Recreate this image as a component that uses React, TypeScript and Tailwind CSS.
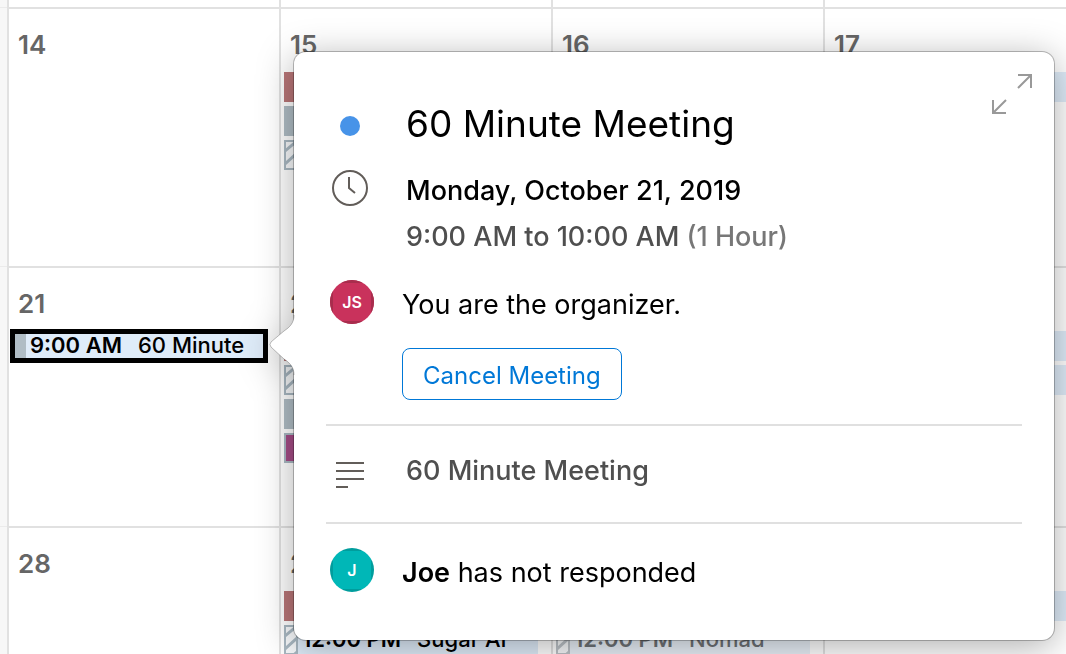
import React from "react";

type Bar = "red" | "slate" | "hatch" | "hatchLight" | "purple" | "sky";

interface CalendarEvent {
  bar: Bar;
  time?: string;
  title?: string;
  fill?: boolean;
  muted?: boolean;
  selected?: boolean;
}

interface Day {
  label?: string;
  events: CalendarEvent[];
}

const weeks: Day[][] = [
  [
    { label: "14", events: [] },
    { label: "15", events: [{ bar: "red" }, { bar: "slate" }, { bar: "hatch" }] },
    { label: "16", events: [] },
    { label: "17", events: [{ bar: "sky", fill: true }] },
  ],
  [
    {
      label: "21",
      events: [{ bar: "slate", time: "9:00 AM", title: "60 Minute", fill: true, selected: true }],
    },
    { label: "22", events: [{ bar: "red" }, { bar: "hatch" }, { bar: "slate" }, { bar: "purple" }] },
    { events: [] },
    { events: [{ bar: "sky", fill: true }, { bar: "sky", fill: true }] },
  ],
  [
    { label: "28", events: [] },
    {
      label: "29",
      events: [{ bar: "red" }, { bar: "hatch", time: "12:00 PM", title: "Sugar AI", fill: true }],
    },
    {
      events: [
        { bar: "red" },
        { bar: "hatchLight", time: "12:00 PM", title: "Nomad", fill: true, muted: true },
      ],
    },
    { events: [{ bar: "sky", fill: true }] },
  ],
];

const barClass: Record<Bar, string> = {
  red: "bg-[#b97678]",
  slate: "bg-[#b0bdc5]",
  hatch: "border-2 border-[#a9b8c2] bg-[#f7f9fb] text-[#a9b8c2]",
  hatchLight: "border-2 border-[#bcc2c7] bg-[#f7f9fb] text-[#bcc2c7]",
  purple: "border-2 border-[#a9b8c2] bg-[#a54c86]",
  sky: "bg-[#dcebf6]",
};

function EventBar({ bar }: { bar: Bar }) {
  const hatched = bar === "hatch" || bar === "hatchLight";
  return (
    <span className={`h-full w-3.5 shrink-0 overflow-hidden ${barClass[bar]}`}>
      {hatched && (
        <svg viewBox="0 0 10 26" className="block h-full w-full" fill="none" stroke="currentColor" strokeWidth="3">
          <path d="M-1 9 11 -1M-1 22 11 11M-1 36 11 25" />
        </svg>
      )}
    </span>
  );
}

function EventRow({ event }: { event: CalendarEvent }) {
  const fill = event.fill ? (event.muted ? "bg-[#e9f0f8]" : "bg-[#dfecf9]") : "";
  const ink = event.muted ? "text-[#6e7276]" : "text-black";
  const outline = event.selected ? "outline-[5px] -outline-offset-3 outline-black" : "";
  return (
    <button
      type="button"
      className={`flex h-[30px] w-full items-start overflow-hidden text-left text-[22px] leading-7 whitespace-nowrap ${fill} ${ink} ${outline}`}
    >
      <EventBar bar={event.bar} />
      {event.time && <span className="ml-1 font-semibold">{event.time}</span>}
      {event.title && <span className="ml-4 font-medium">{event.title}</span>}
    </button>
  );
}

function Calendar() {
  const grid = "grid grid-cols-[7px_repeat(4,minmax(272px,1fr))]";
  return (
    <div className="grid grid-rows-[7px_259px_260px_260px]">
      <div className={grid}>
        <div className="bg-[#f7f7f7]" />
        {weeks[0].map((_, i) => (
          <div key={i} className="border-l-2 border-[#e1e1e1]" />
        ))}
      </div>
      {weeks.map((week, w) => (
        <div key={w} className={grid}>
          <div className="border-t border-[#ebebeb] bg-[#f7f7f7]" />
          {week.map((day, d) => (
            <div key={d} className="border-t-2 border-l-2 border-[#e1e1e1] pr-[13px] pl-[3px]">
              <div className="flex h-[63px] items-start px-1.5 pt-5 text-[26px] leading-8 font-semibold text-[#666]">
                {day.label}
              </div>
              <div className="flex flex-col gap-1">
                {day.events.map((event, i) => (
                  <EventRow key={i} event={event} />
                ))}
              </div>
            </div>
          ))}
        </div>
      ))}
    </div>
  );
}

function Avatar({ initials, className }: { initials: string; className: string }) {
  return (
    <div className="ml-1 size-11 overflow-hidden rounded-full">
      <div
        className={`flex size-full items-center justify-center border-3 text-base font-semibold text-white ${className}`}
      >
        {initials}
      </div>
    </div>
  );
}

function ClockIcon() {
  return (
    <svg viewBox="0 0 48 36" className="h-9 w-12" fill="none" stroke="#625d59" strokeWidth="2">
      <circle cx="24" cy="18" r="17" />
      <path d="M23 7V18L29 23" />
    </svg>
  );
}

function NotesIcon() {
  return (
    <svg viewBox="0 0 48 28" className="h-7 w-12" fill="none" stroke="#625d59" strokeWidth="2">
      <path d="M10 3H38M10 11H38M10 19H38M10 27H22" />
    </svg>
  );
}

function ExpandIcon() {
  return (
    <svg viewBox="0 0 42 42" className="size-[42px]" fill="none" stroke="#999" strokeWidth="2">
      <path d="M27 2H40V15M40 2 27 15M2 27V40H15M2 40 15 27" />
    </svg>
  );
}

function Popover() {
  const row = "grid grid-cols-[76px_1fr]";
  return (
    <div className="absolute top-[52px] right-3 left-[294px] drop-shadow-[0_6px_18px_rgba(0,0,0,0.32)]">
      <section
        aria-label="60 Minute Meeting"
        className="rounded-xl bg-white px-8 pt-11 pb-11 text-[27px] leading-[46px] text-black ring-1 ring-black/25"
      >
        <header className={`${row} h-[60px]`}>
          <span className="mt-5 ml-3.5 size-5 rounded-full bg-[#4793e8]" />
          <h1 className="pl-1 text-[37px] leading-14">60 Minute Meeting</h1>
        </header>
        <div className={`${row} pt-3`}>
          <div className="pt-0.5">
            <ClockIcon />
          </div>
          <div className="pl-1 font-[450]">
            <p>Monday, October 21, 2019</p>
            <p className="text-[#4f4f4f]">
              9:00 AM to 10:00 AM <span className="text-[#777]">(1 Hour)</span>
            </p>
          </div>
        </div>
        <div className={`${row} pt-5 pb-6`}>
          <Avatar initials="JS" className="border-[#a82d4d] bg-[#c9325c]" />
          <div>
            <p className="pt-0.5">You are the organizer.</p>
            <button
              type="button"
              className="mt-5 block h-[52px] rounded-lg border border-[#0078d7] px-5 pt-1 text-2xl text-[#0078d7]"
            >
              Cancel Meeting
            </button>
          </div>
        </div>
        <div className={`${row} border-y-2 border-[#e0e0e0] pt-[22px] pb-7`}>
          <div className="pt-3">
            <NotesIcon />
          </div>
          <p className="pl-1 font-[450] text-[#4f4f4f]">60 Minute Meeting</p>
        </div>
        <div className={`${row} pt-6`}>
          <Avatar initials="J" className="border-[#009d9d] bg-[#00b7b7]" />
          <p className="pt-0.5">
            <span className="font-semibold">Joe</span> has not responded
          </p>
        </div>
      </section>
      <svg viewBox="0 0 26 60" className="absolute top-[263px] -left-[25px] h-[60px] w-[26px]" fill="none">
        <path d="M26 0H25C25 8 21 12 15 16L2 27Q0 29.500 2 32L15 44C21 48 25 52 25 60H26Z" fill="#fff" />
        <path d="M25 0C25 8 21 12 15 16L2 27Q0 29.500 2 32L15 44C21 48 25 52 25 60" stroke="#000" strokeOpacity="0.25" />
      </svg>
      <button type="button" aria-label="Expand" className="absolute top-[21px] right-[21px]">
        <ExpandIcon />
      </button>
    </div>
  );
}

export default function App() {
  return (
    <main className="relative h-screen overflow-hidden bg-white font-['Inter','Liberation_Sans',sans-serif]">
      <Calendar />
      <Popover />
    </main>
  );
}
